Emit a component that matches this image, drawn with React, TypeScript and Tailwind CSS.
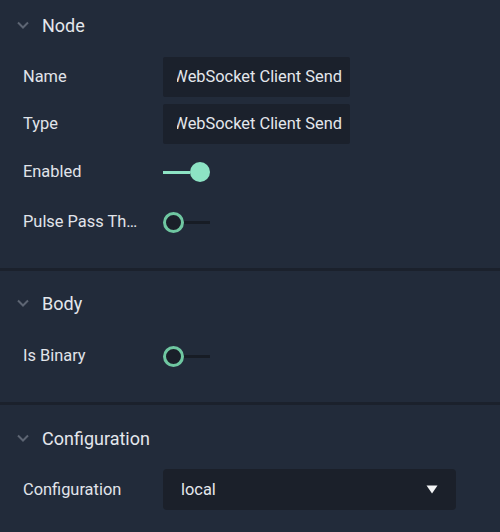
import React from 'react';

const font = { fontFamily: 'Roboto, "Noto Sans", sans-serif' };

const Chevron = () => (
  <svg width="14" height="10" viewBox="0 0 14 10" className="text-[#5d6573]">
    <path d="M2 2.5 L7 7.5 L12 2.5" fill="none" stroke="currentColor" strokeWidth="2" />
  </svg>
);

const Header = ({ title }: { title: string }) => (
  <div className="h-[50px] flex items-center pl-[16px]">
    <Chevron />
    <span className="ml-[12px] text-[18px] text-[#e4e7ec]">{title}</span>
  </div>
);

const Row = ({ label, className, children }: { label: string; className?: string; children: React.ReactNode }) => (
  <div className={`flex items-center h-[40px] pl-[23px] ${className ?? ''}`}>
    <div className="w-[116px] mr-[24px] pt-[1px] truncate text-[16.4px] text-[#e1e4ea]">{label}</div>
    {children}
  </div>
);

const TextBox = ({ value }: { value: string }) => (
  <div className="w-[187px] h-[40px] bg-[#1b212c] flex items-center pl-[14px] pr-[8px] rounded-[2px]">
    <div className="flex-1 flex justify-end overflow-hidden pt-[1px]">
      <span className="whitespace-nowrap text-[16.4px] text-[#e4e7ec]">{value}</span>
    </div>
  </div>
);

const Toggle = ({ on }: { on: boolean }) =>
  on ? (
    <div className="flex items-center w-[47px]">
      <div className="w-[27px] h-[3px] bg-[#8de3c4]" />
      <div className="w-[20px] h-[20px] rounded-full bg-[#8de3c4]" />
    </div>
  ) : (
    <div className="flex items-center w-[47px]">
      <div className="w-[21px] h-[21px] rounded-full border-[3px] border-[#6fc7a1] bg-[#1a1f29]" />
      <div className="w-[26px] h-[3px] bg-[#171c25]" />
    </div>
  );

export default function App() {
  return (
    <div style={font} className="w-[500px] h-[532px] bg-[#222b3a] overflow-hidden">
      <div className="pb-[26px] border-b-[3px] border-[#1b212c]">
        <Header title="Node" />
        <Row label="Name" className="mt-[7px]">
          <TextBox value="WebSocket Client Send" />
        </Row>
        <Row label="Type" className="mt-[7px]">
          <TextBox value="WebSocket Client Send" />
        </Row>
        <Row label="Enabled" className="mt-[8px]">
          <Toggle on />
        </Row>
        <Row label="Pulse Pass Through" className="mt-[10px]">
          <Toggle on={false} />
        </Row>
      </div>
      <div className="pt-[7px] pb-[26px] border-b-[3px] border-[#1b212c]">
        <Header title="Body" />
        <Row label="Is Binary" className="mt-[8px]">
          <Toggle on={false} />
        </Row>
      </div>
      <div className="pt-[8px]">
        <Header title="Configuration" />
        <Row label="Configuration" className="mt-[6px] h-[41px]">
          <div className="w-[293px] h-[41px] bg-[#1b202a] rounded-[4px] flex items-center justify-between pl-[18px] pr-[18px]">
            <span className="text-[16.4px] text-[#e4e7ec] pt-[1px]">local</span>
            <svg width="12" height="9" viewBox="0 0 12 9">
              <path d="M0.5 0.5 H11.5 L6 8.5 Z" fill="#f3f4f6" />
            </svg>
          </div>
        </Row>
      </div>
    </div>
  );
}
